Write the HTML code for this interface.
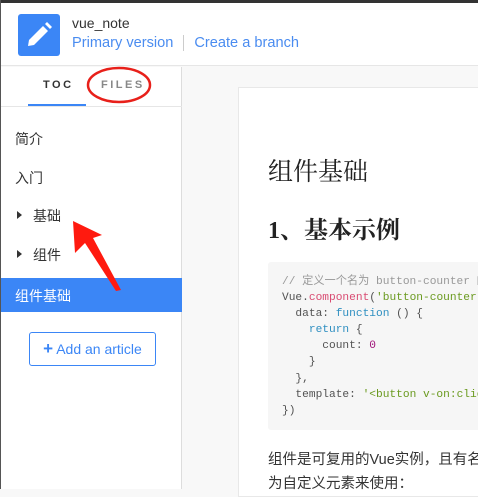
<!DOCTYPE html>
<html><head><meta charset="utf-8"><style>
*{margin:0;padding:0;box-sizing:border-box}
body{width:478px;height:489px;overflow:hidden;background:#f8f8f8;font-family:"Liberation Sans","Noto Sans CJK SC",sans-serif;position:relative}
.top{position:absolute;left:0;top:0;width:478px;height:3px;background:#333}
.hdr{position:absolute;left:1px;top:3px;width:477px;height:63px;background:#fff;border-bottom:1px solid #e6e6e6}
.logo{position:absolute;left:17px;top:11px;width:42px;height:42px;background:#3b86f6;border-radius:3px}
.name{position:absolute;left:71px;top:12px;font-size:14px;color:#333}
.links{position:absolute;left:71px;top:32px;font-size:14.6px;color:#4a8cf0}
.sep{display:inline-block;width:1px;height:16px;background:#ccc;vertical-align:middle;margin:0 10px}
.side{position:absolute;left:1px;top:67px;width:181px;height:422px;background:#fff;border-right:1px solid #ddd}
.left{position:absolute;left:0;top:0;width:1px;height:489px;background:#555}
.tab{position:absolute;top:12px;font-size:11px;letter-spacing:2.5px;font-weight:bold}
.ul{position:absolute;left:27px;top:37px;width:58px;height:2px;background:#3b86f6}
.tl{position:absolute;left:0;top:39px;width:181px;height:1px;background:#e6e6e6}
.it{position:absolute;left:14px;font-size:14px;color:#333}
.tri{position:absolute;left:16px;width:0;height:0;border-top:4px solid transparent;border-bottom:4px solid transparent;border-left:5px solid #333}
.act{position:absolute;left:0;top:211px;width:181px;height:34px;background:#3b86f6;color:#fff;font-size:14px;padding:8px 14px}
.btn{position:absolute;left:28px;top:265px;width:127px;height:34px;border:1px solid #3b86f6;border-radius:3px;color:#3b86f6;font-size:14px;text-align:center;line-height:32px}
.card{position:absolute;left:238px;top:87px;width:250px;height:410px;background:#fff;border:1px solid #e8e8e8}
h1{position:absolute;left:268px;top:152px;font-family:"Liberation Serif","Noto Serif CJK SC",serif;font-size:25px;font-weight:normal;color:#222;white-space:nowrap}
h2{position:absolute;left:268px;top:210px;font-family:"Liberation Serif","Noto Serif CJK SC",serif;font-size:24px;font-weight:bold;color:#222;white-space:nowrap}
pre{position:absolute;left:268px;top:262px;width:220px;height:168px;background:#f6f6f6;border-radius:3px;padding:12px 14px;font-family:"Liberation Mono","Noto Sans CJK SC",monospace;font-size:11.2px;line-height:16.1px;color:#525252;white-space:pre;overflow:hidden}
.c{color:#999}.r{color:#d94b72}.g{color:#6a9a1f}.b{color:#2f8fc1}.m{color:#a0147a}
p{position:absolute;left:268px;top:448px;font-size:14.5px;line-height:24px;color:#333;white-space:nowrap}
</style></head><body>
<div class="top"></div>
<div class="hdr">
<div class="logo"><svg width="42" height="42" viewBox="0 0 42 42"><path d="M10 32 L11 26 L25 12 L30 17 L16 31 Z" fill="#fff"/><path d="M27 10 L29 8 L34 13 L32 15 Z" fill="#fff"/></svg></div>
<div class="name">vue_note</div>
<div class="links">Primary version<span class="sep"></span>Create a branch</div>
</div>
<div class="side">
<div class="tab" style="left:42px;color:#333">TOC</div>
<div class="tab" style="left:100px;color:#888">FILES</div>
<div class="ul"></div><div class="tl"></div>
<div class="it" style="top:62px">简介</div>
<div class="it" style="top:101px">入门</div>
<div class="tri" style="top:144px"></div><div class="it" style="left:32px;top:139px">基础</div>
<div class="tri" style="top:183px"></div><div class="it" style="left:32px;top:178px">组件</div>
<div class="act">组件基础</div>
<div class="btn"><b style="font-size:17px">+</b> Add an article</div>
</div>
<div class="left"></div>
<div class="card"></div>
<h1>组件基础</h1>
<h2>1、基本示例</h2>
<pre><span class="c">// 定义一个名为 button-counter 的新组件</span>
Vue.<span class="r">component</span>(<span class="g">'button-counter'</span>, {
  data: <span class="b">function</span> () {
    <span class="b">return</span> {
      count: <span class="m">0</span>
    }
  },
  template: <span class="g">'&lt;button v-on:click="count++"&gt;'</span>
})</pre>
<p>组件是可复用的Vue实例，且有名字<br>为自定义元素来使用：</p>
<svg style="position:absolute;left:0;top:0" width="478" height="489">
<ellipse cx="119" cy="85" rx="31" ry="17" fill="none" stroke="#e8201a" stroke-width="2.5"/>
<polygon points="73,221 102,235 93,238 121,290 116,291 85,243 75,253" fill="#ff1a0f"/>
</svg>
</body></html>
